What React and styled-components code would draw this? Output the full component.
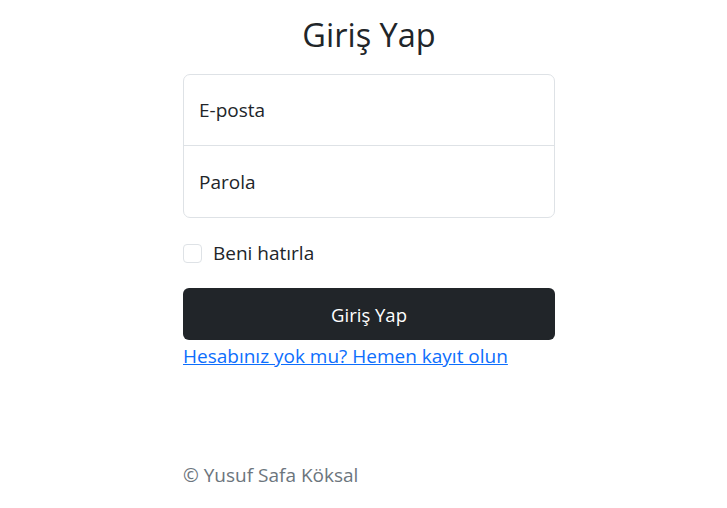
import React, { useState } from "react";
import styled, { createGlobalStyle } from "styled-components";

const GlobalStyle = createGlobalStyle`
  body {
    margin: 0;
    background: #fff;
    color: #212529;
    font-family: "Open Sans", "Noto Sans", sans-serif;
  }
`;

const Page = styled.div`
  min-height: 100vh;
  box-sizing: border-box;
  padding: 16px 0 0 11px;
  display: flex;
  flex-direction: column;
`;

const Container = styled.main`
  width: 372px;
  margin: 0 auto;
`;

const Title = styled.h1`
  margin: 0 0 20px;
  text-align: center;
  font-size: 32.5px;
  font-weight: 400;
  line-height: 38px;
`;

const FieldGroup = styled.div`
  border: 1px solid #dee2e6;
  border-radius: 7px;
  overflow: hidden;
`;

const Field = styled.label`
  display: flex;
  align-items: center;
  height: ${(p) => (p.$first ? "70px" : "71px")};
  padding: 0 15px;
  font-size: 19px;
  border-top: ${(p) => (p.$first ? "none" : "1px solid #dee2e6")};
  cursor: text;
`;

const CheckRow = styled.label`
  display: flex;
  align-items: center;
  gap: 11px;
  height: 24px;
  margin-top: 23px;
  font-size: 19px;
  cursor: pointer;
`;

const CheckBox = styled.span`
  width: 19px;
  height: 19px;
  border: 1px solid #dee2e6;
  border-radius: 4px;
  box-sizing: border-box;
  background: ${(p) => (p.$checked ? "#0d6efd" : "#fff")};
`;

const SubmitButton = styled.button`
  display: block;
  width: 100%;
  height: 52px;
  margin-top: 23px;
  border: none;
  border-radius: 6px;
  background: #212529;
  color: #fff;
  font-family: inherit;
  font-size: 18.5px;
`;

const RegisterLink = styled.a`
  display: inline-block;
  margin-top: 3px;
  line-height: 26px;
  color: #0d6efd;
  font-size: 19px;
  text-decoration: underline;
`;

const Footer = styled.footer`
  width: 372px;
  margin: 93px auto 0;
  line-height: 26px;
  color: #6c757d;
  font-size: 19px;
`;

export default function App() {
  const [remember, setRemember] = useState(false);

  return (
    <Page>
      <GlobalStyle />
      <Container>
        <Title>Giriş Yap</Title>
        <FieldGroup>
          <Field $first>E-posta</Field>
          <Field>Parola</Field>
        </FieldGroup>
        <CheckRow onClick={() => setRemember(!remember)}>
          <CheckBox $checked={remember} />
          Beni hatırla
        </CheckRow>
        <SubmitButton type="button">Giriş Yap</SubmitButton>
        <RegisterLink href="#">Hesabınız yok mu? Hemen kayıt olun</RegisterLink>
      </Container>
      <Footer>© Yusuf Safa Köksal</Footer>
    </Page>
  );
}
